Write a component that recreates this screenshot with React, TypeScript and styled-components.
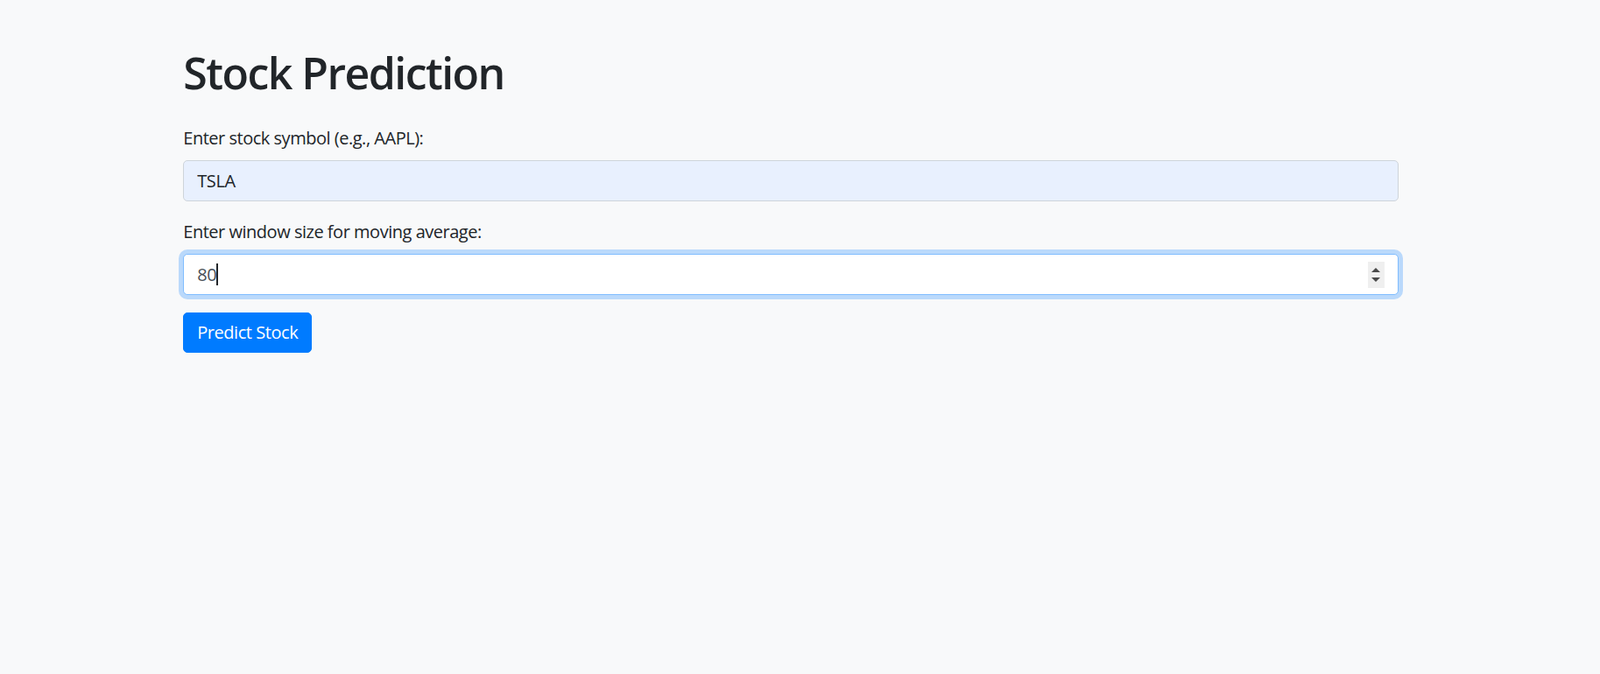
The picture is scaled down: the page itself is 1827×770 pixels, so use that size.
import React from "react";
import styled, { createGlobalStyle } from "styled-components";

const GlobalStyle = createGlobalStyle`
  * {
    box-sizing: border-box;
  }
  body {
    margin: 0;
    background: #f8f9fa;
    color: #212529;
    font-family: "Open Sans", "Noto Sans", sans-serif;
  }
`;

const Page = styled.div`
  min-height: 770px;
  padding-right: 21px;
`;

const Container = styled.div`
  max-width: 1425px;
  margin: 0 auto;
  padding: 53px 18.75px 0;
`;

const Title = styled.h1`
  margin: 0 0 30px;
  font-size: 50px;
  line-height: 60px;
  font-weight: 600;
  letter-spacing: -1.55px;
`;

const Form = styled.form`
  display: flex;
  flex-direction: column;
  align-items: flex-start;
`;

const Group = styled.div`
  width: 100%;
  margin-bottom: 20px;
`;

const Label = styled.label`
  display: block;
  margin-bottom: 10px;
  font-size: 20px;
  line-height: 30px;
  letter-spacing: -0.48px;
`;

const FieldWrap = styled.div`
  position: relative;
`;

const Input = styled.input<{ $autofill?: boolean; $focused?: boolean }>`
  display: block;
  width: 100%;
  height: 47px;
  padding: 7.5px 15px;
  font-family: inherit;
  font-size: 20px;
  line-height: 30px;
  letter-spacing: -0.4px;
  color: ${(p) => (p.$autofill ? "#212529" : "#495057")};
  background: ${(p) => (p.$autofill ? "#e8f0fe" : "#fff")};
  border: 1px solid ${(p) => (p.$focused ? "#80bdff" : "#ced4da")};
  border-radius: 5px;
  outline: none;
  box-shadow: ${(p) =>
    p.$focused ? "0 0 0 5px rgba(0, 123, 255, 0.25)" : "none"};
  caret-color: transparent;
`;

const Caret = styled.span`
  position: absolute;
  left: 38px;
  top: 11px;
  width: 1.5px;
  height: 25px;
  background: #212529;
`;

const Spinner = styled.span`
  position: absolute;
  right: 16px;
  top: 9px;
  width: 19px;
  height: 30px;
  background: #efefef;
  display: flex;
  flex-direction: column;
  align-items: center;
  justify-content: center;
  gap: 6px;
`;

const Arrow = styled.span<{ $down?: boolean }>`
  width: 0;
  height: 0;
  border-left: 5px solid transparent;
  border-right: 5px solid transparent;
  ${(p) =>
    p.$down
      ? "border-top: 5px solid #4a4a4a;"
      : "border-bottom: 5px solid #4a4a4a;"}
`;

const Button = styled.button`
  padding: 7px 15px;
  font-family: inherit;
  font-size: 20px;
  line-height: 30px;
  letter-spacing: -0.45px;
  color: #fff;
  background: #007bff;
  border: 1px solid #007bff;
  border-radius: 5px;
  cursor: pointer;
`;

const App = () => {
  return (
    <>
      <GlobalStyle />
      <Page>
        <Container>
          <Title>Stock Prediction</Title>
          <Form onSubmit={(e) => e.preventDefault()}>
            <Group>
              <Label htmlFor="symbol">Enter stock symbol (e.g., AAPL):</Label>
              <Input id="symbol" $autofill defaultValue="TSLA" readOnly />
            </Group>
            <Group>
              <Label htmlFor="window">Enter window size for moving average:</Label>
              <FieldWrap>
                <Input id="window" $focused defaultValue="80" readOnly />
                <Caret />
                <Spinner>
                  <Arrow />
                  <Arrow $down />
                </Spinner>
              </FieldWrap>
            </Group>
            <Button type="submit">Predict Stock</Button>
          </Form>
        </Container>
      </Page>
    </>
  );
};

export default App;
